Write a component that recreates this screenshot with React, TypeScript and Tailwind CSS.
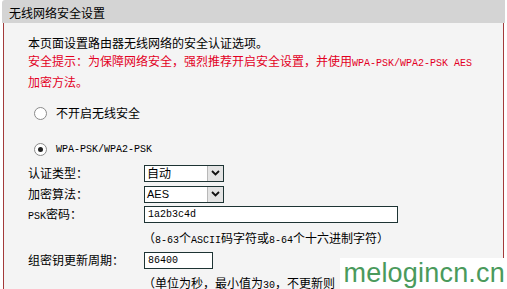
import React from "react";

const cjk = "font-['Noto_Sans_CJK_SC','Noto_Sans',sans-serif]";
const mono = "font-['Liberation_Mono','DejaVu_Sans_Mono',monospace]";

function Mono({ children }: { children: React.ReactNode }) {
  return <span className={`${mono} text-[10px]`}>{children}</span>;
}

function Radio({ checked }: { checked?: boolean }) {
  return (
    <span className="flex h-[13px] w-[13px] items-center justify-center rounded-full border border-[#8a8a8a] bg-white">
      {checked ? <span className="h-[5px] w-[5px] rounded-full bg-[#222]" /> : null}
    </span>
  );
}

function Select({ value, small }: { value: string; small?: boolean }) {
  return (
    <div className="flex h-[17px] w-[80px] items-stretch border border-[#1e3434] bg-white">
      <div className={`flex flex-1 items-center pl-[2px] ${small ? "text-[11px] font-['Liberation_Sans',sans-serif]" : "text-[12px]"}`}>
        {value}
      </div>
      <div className="flex w-[16px] items-center justify-center border-l border-[#b8b8b8] bg-[#e4e4e4]">
        <svg width="9" height="6" viewBox="0 0 9 6">
          <path d="M1 1 L4.5 4.5 L8 1" fill="none" stroke="#111" strokeWidth="1.8" />
        </svg>
      </div>
    </div>
  );
}

function Row({ label, children, className }: { label: React.ReactNode; children: React.ReactNode; className?: string }) {
  return (
    <div className={`flex h-[20px] items-center ${className ?? ""}`}>
      <div className="w-[116px]">{label}</div>
      {children}
    </div>
  );
}

export default function App() {
  return (
    <div className={`relative h-[289px] w-[507px] overflow-hidden bg-white text-[12px] text-black ${cjk}`}>
      <div className="mx-[2px] flex h-[23px] items-center rounded-tl-[3px] bg-[#d4d4d4] pl-[7px] pt-[2px] text-[12px]">
        无线网络安全设置
      </div>
      <div className="ml-[3px] mr-[3px] h-[266px] border-x border-[#a33a3a] bg-[#f4f4f4] pl-[24px] pt-[11px]">
        <div className="leading-[18px]">本页面设置路由器无线网络的安全认证选项。</div>
        <div className="leading-[18px] text-[#e3001f]">
          安全提示：为保障网络安全，强烈推荐开启安全设置，并使用<Mono>WPA-PSK/WPA2-PSK AES</Mono>
        </div>
        <div className="leading-[18px] text-[#e3001f]">加密方法。</div>

        <div className="ml-[6px] mt-[13px] flex h-[18px] items-center gap-[9px]">
          <Radio />
          <span>不开启无线安全</span>
        </div>
        <div className="ml-[6px] mt-[18px] flex h-[18px] items-center gap-[9px]">
          <Radio checked />
          <Mono>WPA-PSK/WPA2-PSK</Mono>
        </div>

        <Row label="认证类型：" className="mt-[5px]">
          <Select value="自动" />
        </Row>
        <Row label="加密算法：" className="mt-[1px]">
          <Select value="AES" small />
        </Row>
        <Row label={<><Mono>PSK</Mono>密码：</>}>
          <div className="flex h-[17px] w-[254px] items-center border border-[#1e3434] bg-white pl-[3px]">
            <Mono>1a2b3c4d</Mono>
          </div>
        </Row>
        <Row label="" className="mt-[4px]">
          <span className="-ml-[1px]">
            （<Mono>8-63</Mono>个<Mono>ASCII</Mono>码字符或<Mono>8-64</Mono>个十六进制字符）
          </span>
        </Row>
        <Row label="组密钥更新周期：" className="mt-[2px]">
          <div className="flex h-[17px] w-[69px] items-center border border-[#1e3434] bg-white pl-[3px]">
            <Mono>86400</Mono>
          </div>
        </Row>
        <Row label="" className="mt-[3px]">
          <span className="-ml-[1px]">
            （单位为秒，最小值为<Mono>30</Mono>，不更新则
          </span>
        </Row>
      </div>

      <div className="absolute bottom-0 right-0 flex h-[31px] w-[167px] items-center justify-end bg-white pr-[2px]">
        <span className="font-['Liberation_Sans',sans-serif] text-[27px] leading-none tracking-[0.2px] text-[#4a9a5c]">
          melogincn.cn
        </span>
      </div>
    </div>
  );
}
